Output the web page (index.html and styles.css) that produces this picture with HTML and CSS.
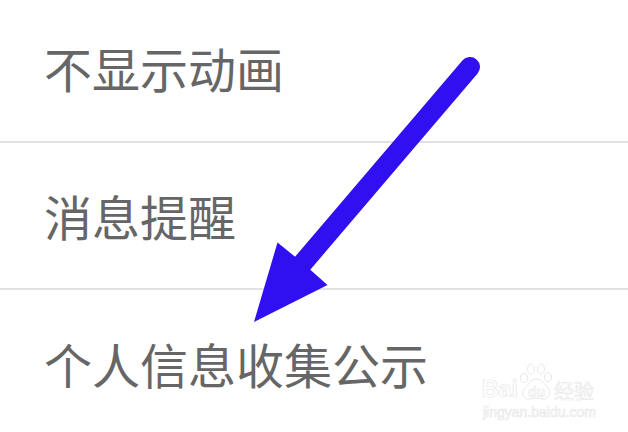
FILE: index.html
```html
<!DOCTYPE html>
<html lang="zh">
<head>
<meta charset="utf-8">
<title>设置</title>
<link rel="stylesheet" href="styles.css">
</head>
<body>
<main class="list">
  <div class="row row-first">不显示动画</div>
  <div class="row row-second">消息提醒</div>
  <div class="row row-third">个人信息收集公示</div>
</main>
<svg class="arrow" width="628" height="432" viewBox="0 0 628 432" aria-hidden="true">
  <path class="arrow-shaft" d="M470 67 L302 264"/>
  <path class="arrow-head" d="M254 322 L277.500 242.500 L296 257.500 L310 269.500 L327.500 285 Z"/>
</svg>
<div class="mark">
  <div class="mark-top">
    <span class="mark-latin">Bai</span>
    <svg class="paw" width="36" height="38" viewBox="0 0 36 38" aria-hidden="true">
      <ellipse cx="5" cy="15" rx="3.500" ry="4.500"/>
      <ellipse cx="12" cy="6" rx="3.500" ry="5"/>
      <ellipse cx="22" cy="6" rx="3.500" ry="5"/>
      <ellipse cx="29" cy="14" rx="3.500" ry="4.500"/>
      <path d="M17 16 C23 16 25 21 29 25 C33 30 30 37 23 36 C19 35 15 35 11 36 C4 37 1 30 6 25 C10 22 11 16 17 16 Z"/>
    </svg>
    <span class="mark-du">du</span>
    <span class="mark-cjk">经验</span>
  </div>
  <div class="mark-url">jingyan.baidu.com</div>
</div>
</body>
</html>
```
FILE: styles.css
```css
html, body {
  margin: 0;
  padding: 0;
  width: 628px;
  height: 432px;
  overflow: hidden;
  background: #fff;
}

body {
  position: relative;
  font-family: "Liberation Sans", "Noto Sans CJK SC", sans-serif;
}

.list {
  display: flex;
  flex-direction: column;
}

.row {
  box-sizing: border-box;
  display: flex;
  align-items: center;
  padding-left: 44px;
  font-family: "Noto Sans CJK SC", sans-serif;
  font-size: 48px;
  line-height: 60px;
  color: #666;
  border-bottom: 2px solid #e2e2e2;
}

.row-first {
  height: 143px;
  padding-bottom: 7px;
}

.row-second {
  height: 147px;
  padding-bottom: 1px;
}

.row-third {
  height: 142px;
  padding-top: 3px;
  border-bottom: 0;
}

.arrow {
  position: absolute;
  left: 0;
  top: 0;
}

.arrow-shaft {
  fill: none;
  stroke: #3010f0;
  stroke-width: 20px;
  stroke-linecap: round;
}

.arrow-head {
  fill: #3010f0;
}

.mark {
  position: absolute;
  left: 481px;
  top: 362px;
  width: 116px;
  color: transparent;
}

.mark-top {
  position: relative;
  height: 40px;
}

.mark-latin,
.mark-du,
.mark-cjk,
.mark-url {
  position: absolute;
  -webkit-text-stroke: 0.7px #e9e9e9;
  white-space: nowrap;
}

.mark-latin {
  left: 1px;
  top: 15px;
  font-size: 23px;
  line-height: 24px;
  font-weight: 700;
}

.paw {
  position: absolute;
  left: 38px;
  top: 1px;
  fill: #fff;
  stroke: #e9e9e9;
  stroke-width: 1;
}

.mark-du {
  left: 47px;
  top: 22px;
  font-size: 14px;
  line-height: 16px;
  font-weight: 700;
}

.mark-cjk {
  left: 73px;
  top: 18px;
  font-family: "Noto Sans CJK SC", sans-serif;
  font-size: 20px;
  line-height: 22px;
}

.mark-url {
  left: 2px;
  top: 42px;
  font-size: 14px;
  line-height: 16px;
}
```
